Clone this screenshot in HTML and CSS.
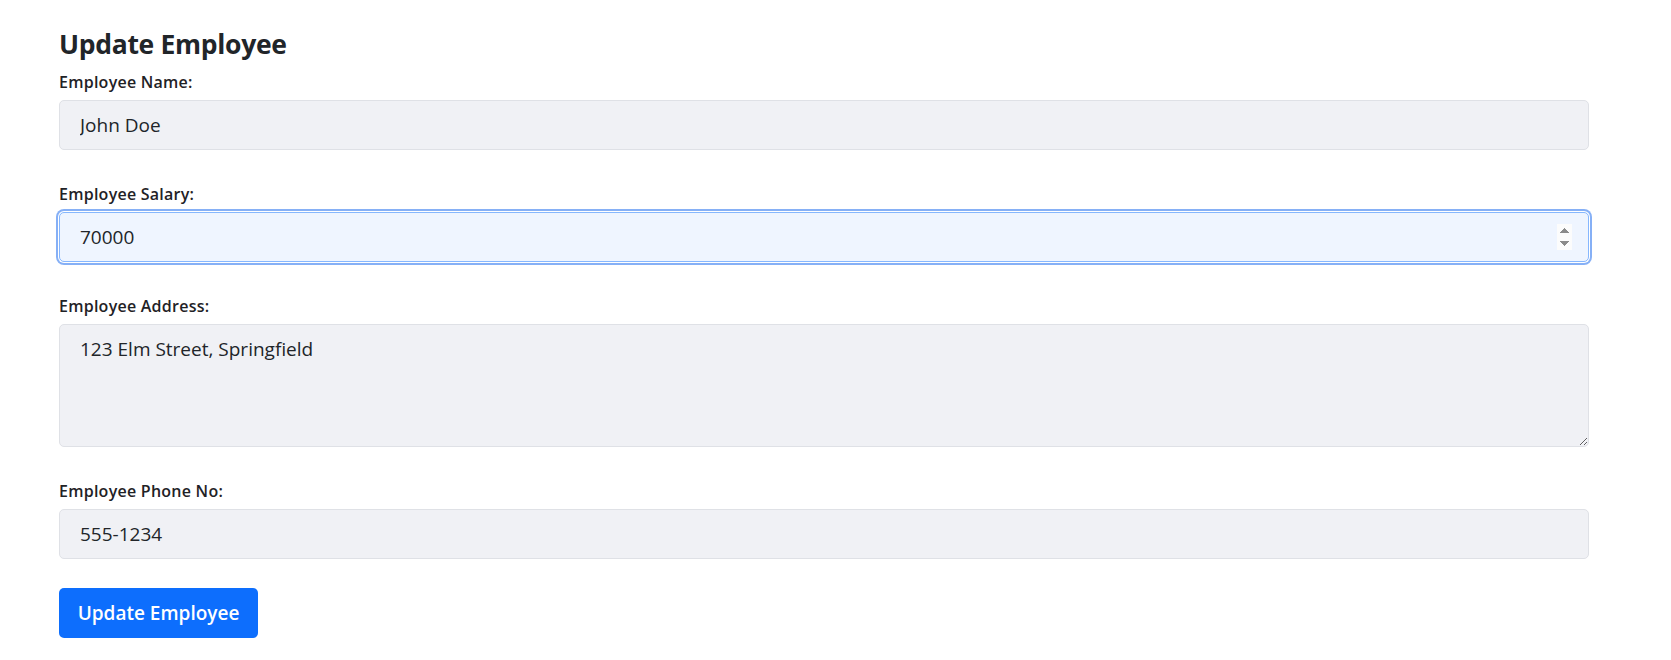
FILE: index.html
```html
<!DOCTYPE html>
<html lang="en">
<head>
<meta charset="utf-8">
<title>Update Employee</title>
<link rel="stylesheet" href="styles.css">
</head>
<body>
<div class="page">
  <h3 class="title">Update Employee</h3>
  <form class="form">
    <div class="field">
      <label class="label" for="name">Employee Name:</label>
      <input class="control" id="name" type="text" value="John Doe">
    </div>
    <div class="field">
      <label class="label" for="salary">Employee Salary:</label>
      <input class="control focused" id="salary" type="number" value="70000">
    </div>
    <div class="field">
      <label class="label" for="address">Employee Address:</label>
      <textarea class="control area" id="address" rows="3">123 Elm Street, Springfield</textarea>
    </div>
    <div class="field">
      <label class="label" for="phone">Employee Phone No:</label>
      <input class="control" id="phone" type="text" value="555-1234">
    </div>
    <button class="btn" type="button">Update Employee</button>
  </form>
</div>
</body>
</html>
```
FILE: styles.css
```css
* { box-sizing: border-box; }
body {
  margin: 0;
  background: #fff;
  color: #212529;
  font-family: "Open Sans", "Noto Sans", sans-serif;
}
.page {
  padding: 29px 82px 0 59px;
}
.title {
  margin: 0 0 9px 0;
  font-size: 26.5px;
  line-height: 1.2;
  font-weight: 700;
  letter-spacing: -0.3px;
  color: #212529;
}
.form { display: flex; flex-direction: column; }
.field { display: flex; flex-direction: column; margin-bottom: 32px; }
.label {
  font-size: 16px;
  font-weight: 600;
  line-height: 24px;
  margin-bottom: 6px;
  letter-spacing: 0.25px;
  color: #1f2226;
}
.control {
  width: 100%;
  height: 50px;
  padding: 8px 16px 8px 20px;
  font-family: inherit;
  font-size: 19px;
  color: #212529;
  background: #f0f1f5;
  border: 1px solid #dfe1e6;
  border-radius: 5px;
  outline: none;
}
.control.focused {
  background: #eff5ff;
  border-color: #86b7fe;
  box-shadow: 0 0 0 1px #fff, 0 0 0 3px #86b0f6;
}
.control::-webkit-inner-spin-button { opacity: 1; }
.area {
  height: 123px;
  padding-top: 10px;
  resize: vertical;
  line-height: 1.5;
}
.btn {
  align-self: flex-start;
  width: 199px;
  height: 50px;
  margin-top: -3px;
  background: #0d6efd;
  color: #fff;
  border: none;
  border-radius: 5px;
  font-family: inherit;
  font-size: 19px;
  font-weight: 600;
  letter-spacing: 0;
}
```
